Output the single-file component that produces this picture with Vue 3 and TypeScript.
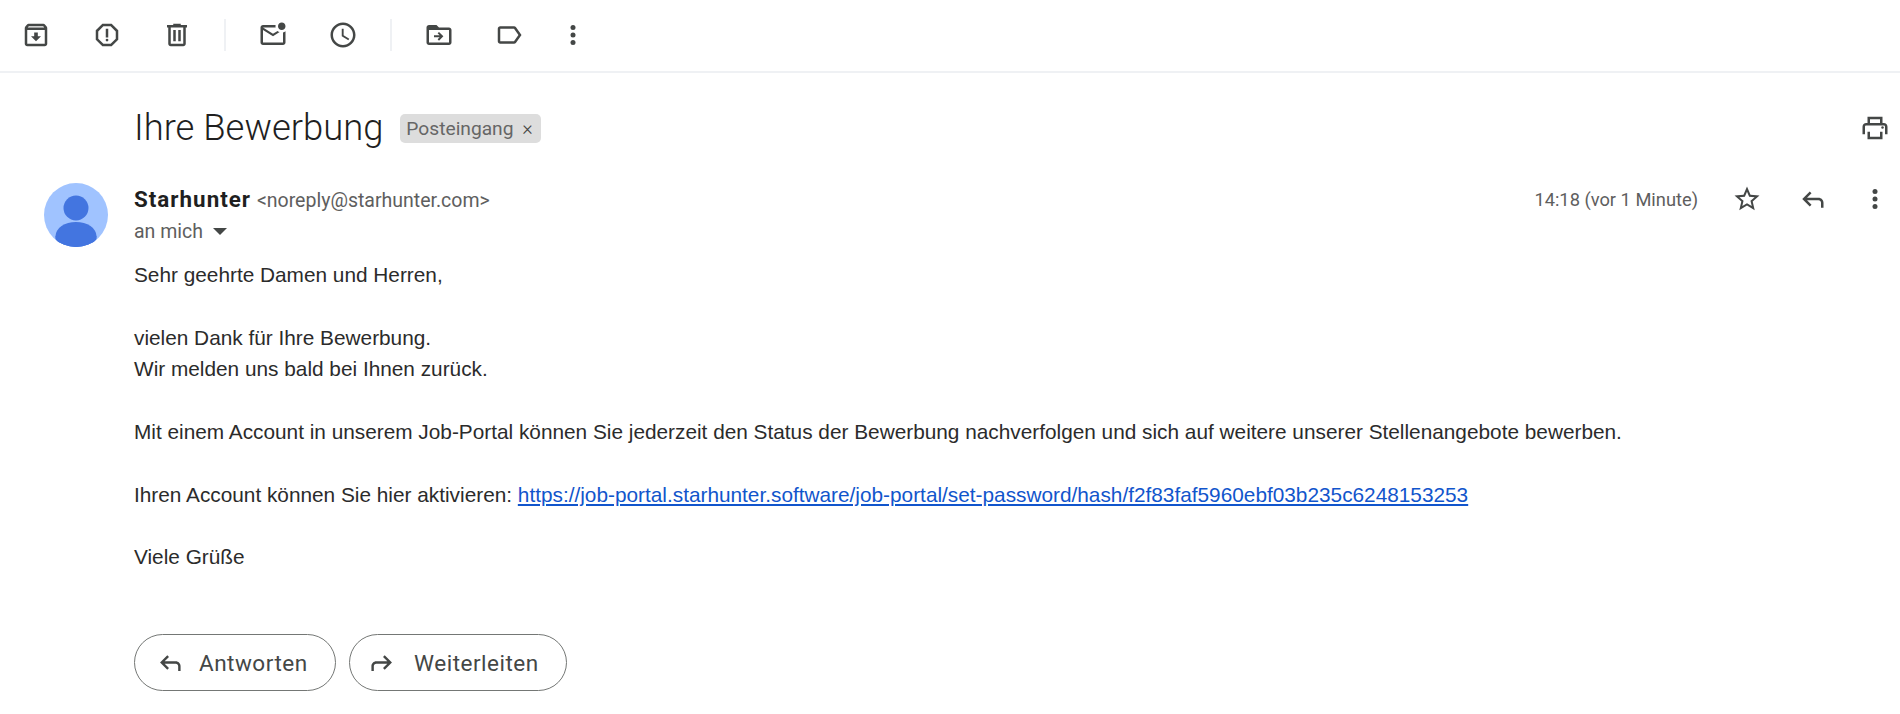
<script setup lang="ts">
const paragraphs: string[][] = [
  ['Sehr geehrte Damen und Herren,'],
  ['vielen Dank für Ihre Bewerbung.', 'Wir melden uns bald bei Ihnen zurück.'],
  ['Mit einem Account in unserem Job-Portal können Sie jederzeit den Status der Bewerbung nachverfolgen und sich auf weitere unserer Stellenangebote bewerben.'],
]
const link = 'https://job-portal.starhunter.software/job-portal/set-password/hash/f2f83faf5960ebf03b235c6248153253'
const replyPath = 'M20 19v-4c0-1.1-.9-2-2-2H8.83l3.58 3.59L11 18l-6-6 6-6 1.41 1.41L8.83 11H18c2.21 0 4 1.79 4 4v4h-2z'
</script>

<template>
  <div class="page">
    <header class="toolbar">
      <div class="group">
        <button class="tool">
          <svg class="ic" viewBox="0 0 24 24"><path d="M20.54 5.23l-1.39-1.68C18.88 3.21 18.47 3 18 3H6c-.47 0-.88.21-1.16.55L3.46 5.23C3.17 5.57 3 6.02 3 6.5V19c0 1.1.9 2 2 2h14c1.1 0 2-.9 2-2V6.5c0-.48-.17-.93-.46-1.27zM6.24 5h11.52l.81.97H5.44l.8-.97zM5 19V8h14v11H5zm8.45-9h-2.9v3H8l4 4 4-4h-2.55z" /></svg>
        </button>
        <button class="tool">
          <svg class="ic" viewBox="0 0 24 24"><path d="M15.73 3H8.27L3 8.27v7.46L8.27 21h7.46L21 15.73V8.27L15.73 3zM19 14.9L14.9 19H9.1L5 14.9V9.1L9.1 5h5.8L19 9.1v5.8z" /><circle cx="12" cy="16" r="1.1" /><path d="M11 7h2v7h-2z" /></svg>
        </button>
        <button class="tool">
          <svg class="ic" viewBox="0 0 24 24"><path d="M15 4V3H9v1H4v2h1v13c0 1.1.9 2 2 2h10c1.1 0 2-.9 2-2V6h1V4h-5zm2 15H7V6h10v13zM9 8h2v9H9zm4 0h2v9h-2z" /></svg>
        </button>
      </div>
      <span class="divider"></span>
      <div class="group">
        <button class="tool">
          <svg class="ic" viewBox="0 0 24 24"><path d="M22 8.98V18c0 1.1-.9 2-2 2H4c-1.1 0-2-.9-2-2V6c0-1.1.9-2 2-2h10.1c-.06.32-.1.66-.1 1s.04.68.1 1H4l8 5 3.67-2.29c.47.43 1.02.76 1.63.98L12 13 4 8v10h16V9.9c.74-.15 1.42-.48 2-.92zM16 5c0 1.66 1.34 3 3 3s3-1.34 3-3-1.34-3-3-3-3 1.34-3 3z" /></svg>
        </button>
        <button class="tool">
          <svg class="ic" viewBox="0 0 24 24"><path d="M11.99 2C6.47 2 2 6.48 2 12s4.47 10 9.99 10C17.52 22 22 17.52 22 12S17.52 2 11.99 2zM12 20c-4.42 0-8-3.58-8-8s3.58-8 8-8 8 3.58 8 8-3.58 8-8 8zm.5-13H11v6l5.25 3.15.75-1.23-4.5-2.67z" /></svg>
        </button>
      </div>
      <span class="divider"></span>
      <div class="group">
        <button class="tool">
          <svg class="ic" viewBox="0 0 24 24"><path d="M20 6h-8l-2-2H4c-1.1 0-2 .9-2 2v12c0 1.1.9 2 2 2h16c1.1 0 2-.9 2-2V8c0-1.1-.9-2-2-2zm0 12H4V8h16v10z" /><path d="M12 9.5l-1.1 1.1 1.6 1.6H8v1.6h4.5l-1.6 1.6 1.1 1.1 3.5-3.5z" /></svg>
        </button>
        <button class="tool">
          <svg class="ic" viewBox="0 0 24 24"><path d="M17.63 5.84C17.27 5.33 16.67 5 16 5L5 5.01C3.9 5.01 3 5.9 3 7v10c0 1.1.9 1.99 2 1.99L16 19c.67 0 1.27-.33 1.63-.84L22 12l-4.37-6.16zM16 17H5V7h11l3.55 5L16 17z" /></svg>
        </button>
        <button class="tool tool-more">
          <svg class="ic" viewBox="0 0 24 24"><circle cx="12" cy="6" r="2" /><circle cx="12" cy="12" r="2" /><circle cx="12" cy="18" r="2" /></svg>
        </button>
      </div>
    </header>

    <main class="mail">
      <div class="subject-row">
        <h1 class="subject">Ihre Bewerbung</h1>
        <span class="chip">Posteingang <span class="chip-x">×</span></span>
        <svg class="ic print" viewBox="0 0 24 24"><path d="M19 8h-1V3H6v5H5c-1.66 0-3 1.34-3 3v6h4v4h12v-4h4v-6c0-1.66-1.34-3-3-3zM8 5h8v3H8V5zm8 14H8v-4h8v4zm2-2v-2H6v2H4v-6c0-.55.45-1 1-1h14c.55 0 1 .45 1 1v6h-2z" /><circle cx="18" cy="11.5" r="1" /></svg>
      </div>

      <div class="message">
        <svg class="avatar" viewBox="0 0 64 64">
          <defs><clipPath id="av"><circle cx="32" cy="32" r="32" /></clipPath></defs>
          <circle cx="32" cy="32" r="32" fill="#a0c3ff" />
          <g clip-path="url(#av)" fill="#4375e0">
            <circle cx="32" cy="25" r="12.5" />
            <ellipse cx="32" cy="53" rx="20.5" ry="14" />
            <rect x="11.5" y="53" width="41" height="12" />
          </g>
        </svg>
        <div class="message-main">
          <div class="meta">
            <div class="sender">
              <div class="from"><strong class="name">Starhunter</strong> <span class="addr">&lt;noreply@starhunter.com&gt;</span></div>
              <div class="to">an mich <span class="caret"></span></div>
            </div>
            <div class="actions">
              <span class="time">14:18 (vor 1 Minute)</span>
              <svg class="ic star" viewBox="0 0 24 24"><path d="M22 9.24l-7.19-.62L12 2 9.19 8.63 2 9.24l5.46 4.73L5.82 21 12 17.27 18.18 21l-1.63-7.03L22 9.24zM12 15.4l-3.76 2.27 1-4.28-3.32-2.88 4.38-.38L12 6.1l1.71 4.04 4.38.38-3.32 2.88 1 4.28L12 15.4z" /></svg>
              <svg class="ic reply" viewBox="0 0 24 24"><path :d="replyPath" /></svg>
              <svg class="ic more" viewBox="0 0 24 24"><circle cx="12" cy="6" r="2" /><circle cx="12" cy="12" r="2" /><circle cx="12" cy="18" r="2" /></svg>
            </div>
          </div>

          <div class="body">
            <p v-for="(para, i) in paragraphs" :key="i">
              <template v-for="(line, j) in para" :key="j">{{ line }}<br v-if="j < para.length - 1" /></template>
            </p>
            <p>Ihren Account können Sie hier aktivieren: <a class="link">{{ link }}</a></p>
            <p>Viele Grüße</p>
          </div>

          <div class="buttons">
            <button class="pill">
              <svg class="ic pill-ic" viewBox="0 0 24 24"><path :d="replyPath" /></svg>
              Antworten
            </button>
            <button class="pill">
              <svg class="ic pill-ic flip" viewBox="0 0 24 24"><path :d="replyPath" /></svg>
              Weiterleiten
            </button>
          </div>
        </div>
      </div>
    </main>
  </div>
</template>

<style>
html, body { margin: 0; background: #fff; }
</style>

<style scoped>
.page {
  width: 1900px;
  height: 714px;
  overflow: hidden;
  background: #fff;
  font-family: Roboto, "Liberation Sans", sans-serif;
}
.ic { display: block; width: 30px; height: 30px; fill: #444746; }
.toolbar {
  display: flex;
  align-items: center;
  height: 69px;
  padding: 0 0 2px 12px;
  border-bottom: 2px solid #eff1f4;
  box-sizing: content-box;
}
.group { display: flex; gap: 22.5px; }
.tool {
  display: flex;
  align-items: center;
  justify-content: center;
  width: 48px;
  height: 48px;
  padding: 0;
  border: 0;
  background: none;
}
.tool-more { margin-left: -7px; }
.divider {
  width: 2px;
  height: 32px;
  margin: 0 23px 0 22.5px;
  background: #eff1f4;
}
.mail { padding-left: 44px; padding-right: 10px; }
.subject-row {
  display: flex;
  align-items: center;
  height: 40px;
  margin-top: 35px;
  padding-left: 90px;
}
.subject {
  margin: 0;
  font-size: 36.4px;
  font-weight: 300;
  color: #1f1f1f;
  line-height: 40px;
}
.chip {
  margin-left: 17px;
  padding: 0 8px 0 6px;
  height: 29px;
  line-height: 29px;
  border-radius: 5px;
  background: #dddddd;
  color: #666666;
  font-size: 19.2px;
}
.chip-x { margin-left: 4px; font-size: 20px; font-weight: 300; color: #444; }
.print { margin-left: auto; }
.message { display: flex; margin-top: 34px; }
.avatar { flex: none; width: 64px; height: 64px; margin-top: 1px; }
.message-main { flex: 1; margin-left: 26px; }
.meta { display: flex; justify-content: space-between; }
.from { height: 34px; line-height: 34px; font-size: 19.5px; }
.name { font-weight: 700; font-size: 22.4px; letter-spacing: 1px; color: #1f1f1f; }
.addr { color: #5e5e5e; font-size: 19.5px; margin-left: 1px; }
.to {
  display: flex;
  align-items: center;
  height: 30px;
  font-size: 19.5px;
  color: #5e5e5e;
}
.caret {
  width: 0;
  height: 0;
  margin-left: 10px;
  border-left: 7px solid transparent;
  border-right: 7px solid transparent;
  border-top: 7px solid #444746;
}
.actions { display: flex; align-items: center; height: 34px; }
.time { font-size: 18.3px; color: #5e5e5e; }
.star { margin-left: 34px; }
.reply { margin-left: 34px; }
.more { margin-left: 34px; }
.body {
  margin-top: 13.4px;
  font-family: "Liberation Sans", Arial, sans-serif;
  font-size: 20.8px;
  line-height: 31.35px;
  color: #2b2b2b;
}
.body p { margin: 0 0 31.35px; }
.link { color: #1155cc; text-decoration: underline; }
.buttons { display: flex; gap: 13px; margin-top: 61.5px; }
.pill {
  display: flex;
  align-items: center;
  gap: 16px;
  height: 57px;
  padding: 0 27.5px 0 19px;
  border: 1px solid #747775;
  border-radius: 29px;
  background: #fff;
  font-family: Roboto, sans-serif;
  font-size: 22.5px;
  font-weight: 450;
  letter-spacing: 0.5px;
  color: #444746;
}
.pill-ic { width: 29px; height: 29px; }
.flip { transform: scaleX(-1); }
</style>
